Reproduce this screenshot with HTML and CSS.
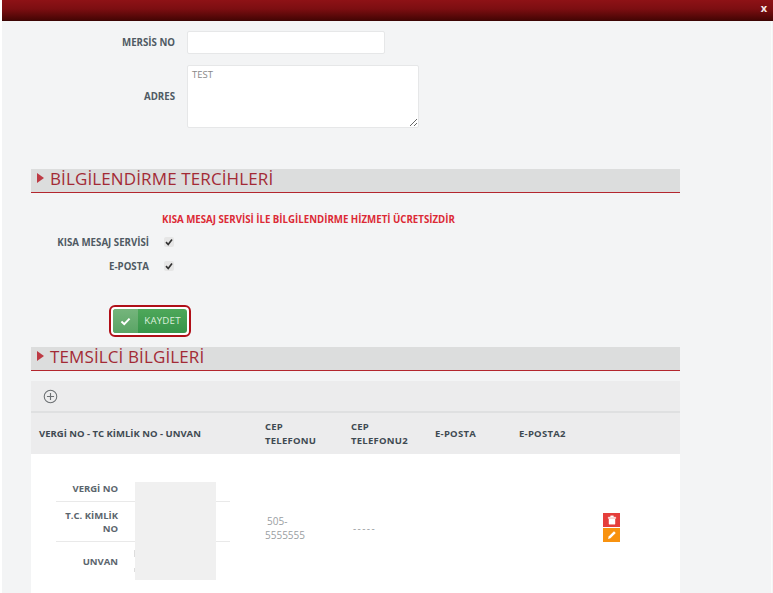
FILE: index.html
```html
<!DOCTYPE html>
<html lang="en">
<head>
  <meta charset="UTF-8" />
  <title>Temsilci Bilgileri</title>
  <link rel="stylesheet" href="styles.css">
</head>
<body>
  <div class="modal">
    <div class="modal-head"><span class="close">x</span></div>
    <div class="modal-body">
      <div class="form-row first">
        <label class="form-label">MERSİS NO</label>
        <input type="text" class="field field-short" />
      </div>
      <div class="form-row area-row">
        <label class="form-label">ADRES</label>
        <textarea class="field field-area">TEST</textarea>
      </div>

      <h3 class="section-title info-title"><span class="arrow"></span>BİLGİLENDİRME TERCİHLERİ</h3>

      <p class="notice">KISA MESAJ SERVİSİ İLE BİLGİLENDİRME HİZMETİ ÜCRETSİZDİR</p>
      <div class="check-list">
        <div class="check-row">
          <label class="check-label">KISA MESAJ SERVİSİ</label>
          <span class="check"><svg viewBox="0 0 10 10" width="10" height="10"><path d="M2 5.2 4.2 7.5 8 2.6" fill="none" stroke="#333" stroke-width="1.7"/></svg></span>
        </div>
        <div class="check-row">
          <label class="check-label">E-POSTA</label>
          <span class="check"><svg viewBox="0 0 10 10" width="10" height="10"><path d="M2 5.2 4.2 7.5 8 2.6" fill="none" stroke="#333" stroke-width="1.7"/></svg></span>
        </div>
      </div>

      <div class="save-wrap">
        <button class="save-btn">
          <span class="save-icon"><svg viewBox="0 0 12 10" width="11" height="9"><path d="M1.5 5 4.6 8 10.5 1.8" fill="none" stroke="#fff" stroke-width="2.2"/></svg></span>
          <span class="save-text">KAYDET</span>
        </button>
      </div>

      <h3 class="section-title"><span class="arrow"></span>TEMSİLCİ BİLGİLERİ</h3>

      <div class="toolbar">
        <svg class="add-icon" viewBox="0 0 16 16" width="15" height="15"><circle cx="8" cy="8" r="6.7" fill="none" stroke="#6b6f72" stroke-width="1.1"/><path d="M8 4.2v7.6M4.2 8h7.6" stroke="#6b6f72" stroke-width="1.2"/></svg>
      </div>

      <table class="list">
        <colgroup>
          <col class="col-main" /><col class="col-tel" /><col class="col-tel2" /><col class="col-mail" /><col class="col-mail" /><col />
        </colgroup>
        <thead>
          <tr>
            <th class="th-main">VERGİ NO - TC KİMLİK NO - UNVAN</th>
            <th class="th-wrap">CEP TELEFONU</th>
            <th class="th-wrap">CEP TELEFONU2</th>
            <th>E-POSTA</th>
            <th>E-POSTA2</th>
            <th></th>
          </tr>
        </thead>
        <tbody>
          <tr>
            <td class="td-main">
              <div class="detail-wrap">
                <table class="detail">
                  <tr class="r1"><th>VERGİ NO</th><td></td></tr>
                  <tr class="r2"><th>T.C. KİMLİK NO</th><td></td></tr>
                  <tr class="r3"><th>UNVAN</th><td></td></tr>
                </table>
                <div class="mask"></div>
              </div>
            </td>
            <td class="tel"><span class="tel-num">505-5555555</span></td>
            <td class="tel"><span class="tel-empty">-----</span></td>
            <td></td>
            <td></td>
            <td class="actions">
              <span class="act act-del">
                <svg viewBox="0 0 12 12" width="10" height="10"><path d="M4.3 2.4V1h3.4v1.4M1.5 2.6h9v1.5h-9zM2.4 4.7h7.2V11H2.4z" fill="#fff" stroke="#fff" stroke-width=".5"/></svg>
              </span>
              <span class="act act-edit">
                <svg viewBox="0 0 12 12" width="10" height="10"><path d="M1.3 10.7 2 7.8 8.4 1.6 10.5 3.7 4.1 10z" fill="#fff"/></svg>
              </span>
            </td>
          </tr>
        </tbody>
      </table>
    </div>
  </div>
</body>
</html>
```

FILE: styles.css
```css
* {
  box-sizing: border-box;
}

html, body {
  margin: 0;
  padding: 0;
  height: 593px;
  overflow: hidden;
  background-color: #fff;
  font-family: "Open Sans", "Noto Sans", sans-serif;
}

.modal {
  margin-left: 2px;
  width: 771px;
  height: 593px;
  overflow: hidden;
  background: linear-gradient(to right, #f3f4f5 769px, #fbfbfb 769px, #fbfbfb 770px, #f3f4f5 770px);
}

.modal-head {
  height: 21px;
  padding-right: 6px;
  text-align: right;
  background: linear-gradient(to bottom, #8e1216 0%, #7c0e11 45%, #460504 100%);
  border-bottom: 1px solid #3c0403;
}

.close {
  display: block;
  color: #f5e8e8;
  font-size: 11px;
  font-weight: 700;
  line-height: 16px;
}

.modal-body {
  padding: 10px 0 0 29px;
  width: 678px;
}

.form-row {
  display: flex;
  align-items: center;
}

.form-label {
  width: 144px;
  margin-right: 12px;
  text-align: right;
  color: #4f5a63;
  font-size: 9.7px;
  font-weight: 700;
}

.field {
  display: block;
  border: 1px solid #e6e7e8;
  border-radius: 2px;
  background-color: #fff;
  color: #888;
  font-family: inherit;
  font-size: 9.5px;
}

.field-short {
  width: 198px;
  height: 23px;
}

.area-row {
  margin-top: 11px;
}

.field-area {
  width: 232px;
  height: 63px;
  padding: 2px 4px;
  resize: vertical;
}

.section-title {
  display: flex;
  align-items: center;
  height: 24px;
  margin: 0;
  padding: 0 0 5px 6px;
  background-color: #dcdddd;
  border-bottom: 1px solid #b3262e;
  color: #a32a35;
  font-size: 17px;
  font-weight: 400;
  letter-spacing: 0.12px;
}

.info-title {
  margin-top: 41px;
}

.arrow {
  width: 0;
  height: 0;
  margin-right: 6px;
  border-left: 7px solid #bd3a44;
  border-top: 5px solid transparent;
  border-bottom: 5px solid transparent;
}

.notice {
  margin: 21px 0 0 131px;
  color: #dc2a35;
  font-size: 9.7px;
  font-weight: 700;
  line-height: 12px;
  white-space: nowrap;
}

.check-list {
  margin-top: 4px;
}

.check-row {
  display: flex;
  align-items: center;
  height: 24px;
}

.check-label {
  width: 118px;
  margin-right: 15px;
  text-align: right;
  color: #4f5a63;
  font-size: 9.7px;
  font-weight: 700;
}

.check {
  display: block;
  width: 10px;
  height: 10px;
  border-radius: 2px;
  background-color: #e6e6e6;
}

.check svg {
  display: block;
}

.save-wrap {
  display: inline-block;
  margin: 27px 0 0 78px;
  padding: 2px;
  border: 2px solid #b00f18;
  border-radius: 6px;
  background-color: #fff;
}

.save-btn {
  display: flex;
  width: 74px;
  height: 24px;
  padding: 0;
  border: none;
  border-radius: 3px;
  overflow: hidden;
  background: linear-gradient(to bottom, #4ea85a, #37944a);
  font-family: inherit;
}

.save-icon {
  display: flex;
  align-items: center;
  justify-content: center;
  width: 25px;
  height: 100%;
  background: linear-gradient(to bottom, #75b57c, #5aa465);
}

.save-text {
  flex: 1;
  color: #dcefdc;
  font-size: 9.7px;
  letter-spacing: 0.2px;
  line-height: 24px;
  text-align: center;
}

.save-wrap + .section-title {
  margin-top: 10px;
}

.toolbar {
  display: flex;
  align-items: center;
  height: 32px;
  margin-top: 10px;
  padding-left: 12px;
  background-color: #ececed;
  border-bottom: 2px solid #dfe0e1;
}

.list {
  width: 649px;
  border-collapse: collapse;
  table-layout: fixed;
  background-color: #fff;
}

.col-main { width: 226px; }
.col-tel { width: 86px; }
.col-tel2 { width: 84px; }
.col-mail { width: 84px; }

.list thead th {
  height: 41px;
  padding: 0 8px;
  background-color: #ececed;
  color: #3f4a52;
  font-size: 9.5px;
  font-weight: 700;
  letter-spacing: 0.25px;
  line-height: 14px;
  text-align: left;
}

.list thead .th-main {
  letter-spacing: 0;
}

.list thead .th-wrap {
  padding-right: 16px;
}

.list tbody td {
  padding: 0 8px;
  height: 148px;
  vertical-align: middle;
  color: #9a9ea2;
  font-size: 10px;
  line-height: 14px;
}

.list tbody .td-main {
  padding: 21px 0 0 25px;
  vertical-align: top;
}

.detail-wrap {
  position: relative;
  width: 174px;
}

.detail {
  width: 174px;
  border-collapse: collapse;
}

.detail th {
  width: 62px;
  padding: 0;
  text-align: right;
  color: #5b656d;
  font-size: 9.5px;
  font-weight: 700;
  line-height: 13px;
}

.list tbody .detail td {
  height: auto;
  padding: 0;
}

.r1 th, .r1 td { height: 26px; border-bottom: 1px solid #e9e9e9; }
.r2 th, .r2 td { height: 40px; border-bottom: 1px solid #e9e9e9; }
.r3 th, .r3 td { height: 40px; }

.r1 th { padding-top: 1px; }
.r2 th { padding-top: 2px; }

.mask {
  position: absolute;
  left: 79px;
  top: 7px;
  width: 81px;
  height: 98px;
  background-color: #f0f0f0;
}

.mask::before {
  content: "";
  position: absolute;
  left: -1px;
  top: 68px;
  width: 1px;
  height: 22px;
  background: linear-gradient(to bottom, #ddd 30%, transparent 30%, transparent 80%, #ddd 80%);
}

.tel-num {
  display: block;
  width: 46px;
  text-indent: 2px;
}

.tel-empty {
  padding-left: 2px;
  letter-spacing: 1.4px;
}

.list tbody .actions {
  padding: 0;
}

.act {
  display: flex;
  align-items: center;
  justify-content: center;
  width: 17px;
  height: 14px;
  margin: 0 0 1px 8px;
}

.act-del { background-color: #e53e3b; }
.act-edit { background-color: #f8920f; }
```
